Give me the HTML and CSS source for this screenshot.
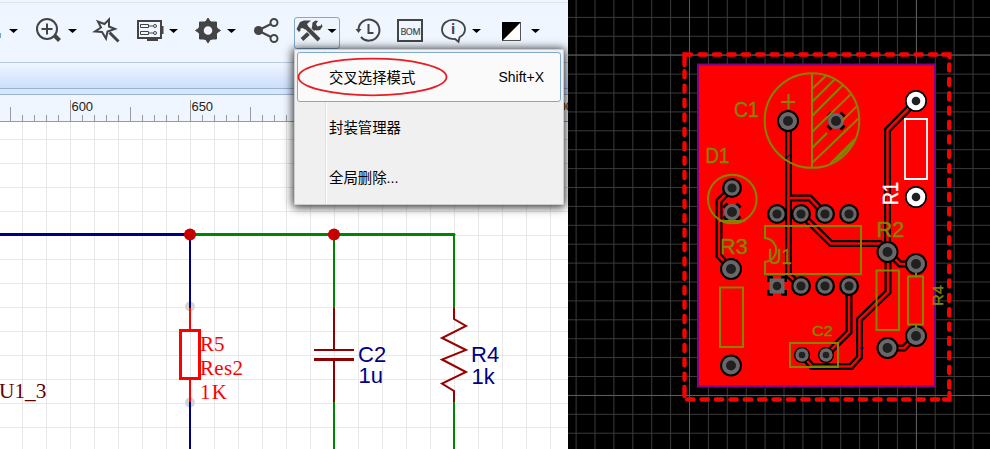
FILE: index.html
```html
<!DOCTYPE html>
<html lang="zh">
<head>
<meta charset="utf-8">
<title>Schematic and PCB</title>
<link rel="stylesheet" href="styles.css">
</head>
<body>
<main class="app">
<section class="schematic">
  <header class="toolbar">
    <svg viewBox="0 0 568 62" width="568" height="62">
      <path d="M0 2.500H568" stroke="#e2e4e8"/>
      <path d="M0 33h1v5H0z" fill="#64a9df"/>
      <g fill="#000"><path d="M9 29h9l-4.500 4z"/><path d="M68 29h9l-4.500 4z"/><path d="M169 29h9l-4.500 4z"/><path d="M227 29h9l-4.500 4z"/><path d="M472 29h9l-4.500 4z"/><path d="M531 29h9l-4.500 4z"/></g>
      <g fill="none" stroke="#444" stroke-width="2">
        <circle cx="47" cy="29" r="10"/><path d="M41.500 29h11M47 23.500v11"/><path d="M54.500 35.500l5 5" stroke-width="4"/>
        <path d="M109 19.500l-4.500 4.500-6.500-2.500 3 6-6 4 7 .5 4 6.500 1.500-7 7.500-2.500-6-2.500z"/><path d="M109.500 32.500l9 9" stroke-width="3"/>
        <path d="M138 21h23v17h-23z"/><path d="M162 26v8" stroke-width="3"/><path d="M147 39.500h11" stroke-width="3"/>
        <path d="M140.500 24.500h8v3h-8zM149 26h4M140.500 31.500h8v3h-8zM149 33h4" stroke-width="1"/><circle cx="155" cy="26" r="1.500" stroke-width="1"/><circle cx="155" cy="33" r="1.500" stroke-width="1"/>
        <circle cx="208" cy="30.500" r="7" stroke-width="5.500"/>
        <path d="M208 18l2.500 4h-5zM208 43l2.500-4h-5zM195.500 30.500l4-2.500v5zM220.500 30.500l-4-2.500v5zM199.500 22h4.500l-4.500 4.500zM216.500 22v4.500l-4.500-4.500zM216.500 39h-4.500l4.500-4.500zM199.500 39v-4.500l4.500 4.500z" fill="#444" stroke-width="1"/>
        <path d="M258 30.500l16-8M258 30.500l16 8" stroke-width="2.200"/><circle cx="274" cy="22.500" r="3.500" fill="#eff6ff"/><circle cx="274" cy="38.500" r="3.500" fill="#eff6ff"/><circle cx="258.500" cy="30.500" r="4.500" fill="#444" stroke="none"/>
      </g>
      <rect x="294.500" y="17.500" width="45" height="31" rx="2.500" fill="#eef5fd" stroke="#7fa9d0"/>
      <path d="M327.500 29h9l-4.500 4z"/>
      <path d="M302 39.500L316 26.500" stroke="#444" stroke-width="4"/>
      <path d="M315.500 20.500l2.500 .500-2 3 1.500 2.500 3.500-1 .5-2 1 3-2.500 3.500-4 .5-4-3 .500-5z" fill="#444"/>
      <path d="M305 26L319 40" stroke="#eef5fd" stroke-width="6"/><path d="M305 26L319 40" stroke="#444" stroke-width="4"/>
      <path d="M296.500 29l3.500-7 4-1.500h7l-4 3.500 1 2-3 3.500-2.500-1.500-2 .500v2l-1.500 1.500z" fill="#444"/>
      <g fill="none" stroke="#444" stroke-width="2"><path d="M358.500 29a10.500 10.500 0 1 1 2.500 8"/><path d="M368.500 24v9h5"/><path d="M355.500 29h6l-3 4z" fill="#444" stroke="none"/>
        <path d="M398 20h24v21h-24z"/><path d="M458.500 41.500l-3.500-2.800c-7.500 .4-13-3.700-13-9.500s5-9.700 11.200-9.700 11.800 4 11.800 9.500c0 4-2.500 6.500-5.500 8z" stroke-width="1.800" transform="translate(0 .3)"/>
      </g>
      <text x="453" y="34" class="info">i</text>
      <text x="400.500" y="34.500" class="bom" textLength="20">BOM</text>
      <path d="M502.500 22.500h18v18h-18z" fill="#fff" stroke="#555"/><path d="M502 22h19l-19 19z"/>
    </svg>
  </header>
  <div class="tabs"></div><div class="splitter"></div>
  <div class="ruler"><svg width="568" height="27" viewBox="0 0 568 27" id="ruler"></svg></div>
  <div class="sheet">
    <svg width="568" height="327" viewBox="0 122 568 327">
      <defs><pattern id="sgrid" x="22" y="139" width="24" height="24" patternUnits="userSpaceOnUse"><path d="M.5 0V24M0 .5H24" stroke="#e8e8e8" fill="none"/></pattern></defs>
      <path d="M0 122H568V449H0z" fill="url(#sgrid)"/>
      <g fill="none" stroke-width="2">
        <path d="M0 234.500H190" stroke="#000084" stroke-width="3"/><path d="M190 234.500H454" stroke="#008400" stroke-width="3" stroke-linecap="round"/>
        <g fill="#d5d5d5"><circle cx="190" cy="306.500" r="5"/><circle cx="190" cy="402.500" r="5"/></g>
        <path d="M190 235V308M190 402V449" stroke="#000084"/>
        <path d="M190 308V330M190 379V402" stroke="#f00"/><path d="M180.500 330.500h19v48h-19z" stroke="#f00" stroke-width="3"/>
        <path d="M334 235V308M334 402V449M454 235V308M454 402V449" stroke="#008400"/>
        <path d="M334 308V350M334 360V402M314 350H354" stroke="#900000"/><path d="M314 359.500H354" stroke="#900000" stroke-width="3"/>
        <path d="M454 308V319L466 326L442 338L466 350L442 359.500L466 372L442 383.500L454 391V402" stroke="#9a0000"/>
      </g>
      <circle cx="190" cy="234.500" r="6" fill="#c80000"/><circle cx="334" cy="234.500" r="6" fill="#c80000"/>
      <g class="part-selected"><text x="200" y="351">R5</text><text x="200" y="375" textLength="43">Res2</text><text x="200" y="399" textLength="27">1K</text></g>
      <text x="-1" y="398" class="net">U1_3</text>
      <g class="part"><text x="358" y="362">C2</text><text x="358.500" y="383">1u</text><text x="471" y="362">R4</text><text x="471.500" y="384">1k</text></g>
    </svg>
  </div>
  <div class="menu">
    <div class="item active"><span>交叉选择模式</span><kbd>Shift+X</kbd></div>
    <div class="item"><span>封装管理器</span></div>
    <div class="item"><span>全局删除...</span></div>
    <svg class="mark" width="152" height="42" viewBox="0 0 152 42"><ellipse cx="76.500" cy="21" rx="74" ry="18.300" fill="none" stroke="#e91c24" stroke-width="1.800"/></svg>
  </div>
</section>
<section class="pcb">
  <svg width="422" height="449" viewBox="568 0 422 449">
    <defs>
      <pattern id="pgrid" x="689" y="54.700" width="18.900" height="18.900" patternUnits="userSpaceOnUse"><path d="M.5 0V18.900M0 .5H18.900" stroke="#3a3a3a" fill="none"/></pattern>
      <path id="tracks" d="M788.500 121V275L801 286M790 198H810L825 214M801 214L831 243.500H880L888 252M916 101L887.500 130V252M888 252V292L859.500 319.500V357L851 366.500H812L802 355M849 286V332L826 355M732 188L719 201V256L731 269M888 252L900 264H916M888 348H904L916 336"/>
      <g id="pad"><circle r="10"/><circle r="7.700" fill="#686868"/><circle r="4.600" fill="#202020"/></g>
      <g id="big"><circle r="11"/><circle r="9" fill="#686868"/><circle r="5" fill="#202020"/></g>
      <g id="thermal"><path d="M-8.500-4.500L-4.500-8.500M4.500-8.500L8.500-4.500M8.500 4.500L4.500 8.500M-4.500 8.500L-8.500 4.500" fill="none" stroke="#000" stroke-width="3"/><circle r="8" fill="#686868"/><circle r="5" fill="#202020"/></g>
      <g id="small"><circle r="8"/><circle r="6.700" fill="#686868"/><circle r="3.300" fill="#202020"/></g>
      <g id="white"><circle r="11"/><circle r="9.300" fill="#fff"/><circle r="4.300" fill="#202020"/></g>
    </defs>
    <path d="M568 0H990V449H568z" fill="#000"/><path d="M568 0H990V449H568z" fill="url(#pgrid)"/>
    <path d="M689.500 0V449M916.500 0V449M568 55H990M568 395.500H990" stroke="#5a5a5a"/>
    <g fill="none" stroke="#f00" stroke-width="4.500">
      <g stroke-linecap="round" stroke-dasharray="6.200 8.200">
        <path d="M699.600 54.500H944M687.200 399.500H944"/><path d="M684.500 71.200V388M949.200 64.400V390" stroke-width="4.300"/>
      </g>
      <path d="M684.500 65V54.500H691M943 54.500H949.500V57M684.500 387V396M944 399.500H949.500V393" stroke-linecap="round" stroke-width="4.300"/>
    </g>
    <path d="M698 64.500H935V386.500H698z" fill="#f00" stroke="#840084" stroke-width="2"/>
    <g fill="none">
      <use href="#tracks" stroke="#000" stroke-width="7"/><use href="#tracks" stroke="#f00" stroke-width="2.600"/>
      <path d="M787 158l4-5M860 348h4M835 347l3 2" stroke="#0000c8"/>
    </g>
    <use href="#big" x="788" y="121"/><use href="#thermal" x="836" y="121"/><use href="#pad" x="732" y="188"/><use href="#thermal" x="732" y="212"/>
    <use href="#pad" x="777" y="214"/><use href="#pad" x="801" y="214"/><use href="#pad" x="825" y="214"/><use href="#pad" x="849" y="214"/>
    <use href="#pad" x="801" y="286"/><use href="#pad" x="825" y="286"/><use href="#pad" x="849" y="286"/>
    <path d="M768.500 282v-4.500h4.500M781 277.500h4.500v4.500M785.500 290v4.500h-4.500M773 294.500h-4.500v-4.500" fill="none" stroke="#000" stroke-width="3"/><path d="M769.500 278.500h15v15h-15z" fill="#686868"/><circle cx="777" cy="286" r="4.300" fill="#202020"/>
    <use href="#big" x="731" y="269"/><use href="#big" x="731" y="365.500"/><use href="#big" x="887.500" y="252"/><use href="#big" x="916" y="264"/><use href="#big" x="916" y="336"/><use href="#big" x="887.500" y="348"/>
    <use href="#small" x="802" y="355"/><use href="#small" x="826" y="355"/>
    <use href="#white" x="916" y="101"/><use href="#white" x="916" y="197"/>
    <g fill="none" stroke="#848400" stroke-width="2">
      <circle cx="812" cy="120.500" r="47.300"/><path d="M812 73V168M788.500 94V109M781 102H795"/>
      <path d="M812 89L825.700 76M812 102L835 79M812 116L843 85M812 132L851 94M812 148L827 133M842 121L857 106M812 163L859 118M830 164L855 139M836 160L853 143" />
      <circle cx="732.300" cy="199" r="24.300"/><path d="M719 221H745"/>
      <path d="M765 226H861V274H765V262C780 260 780 240 765 238z"/>
      <path d="M720 287.500h23v59.500h-23zM876.500 270.500h22.500v59.500h-22.500zM908 276.500h15v48h-15zM790 343h48v24h-48zM916 273v3M916 325v3"/>
    </g>
    <path d="M905 119h22v60h-22z" fill="none" stroke="#fff" stroke-width="1.800"/>
    <g class="silk">
      <text x="734" y="116.500" textLength="25" lengthAdjust="spacingAndGlyphs">C1</text><text x="705.500" y="163" textLength="24" lengthAdjust="spacingAndGlyphs">D1</text><text x="720" y="254" textLength="28" lengthAdjust="spacingAndGlyphs">R3</text><text x="768" y="263.500" textLength="24" lengthAdjust="spacingAndGlyphs">U1</text><text x="876.500" y="237" textLength="28" lengthAdjust="spacingAndGlyphs">R2</text>
      <text class="tiny" x="812" y="336" textLength="21" lengthAdjust="spacingAndGlyphs">C2</text><text class="tiny" transform="translate(942.500 306) rotate(-90)" textLength="21" lengthAdjust="spacingAndGlyphs">R4</text><text class="selected" transform="translate(898 205) rotate(-90)" textLength="23" lengthAdjust="spacingAndGlyphs">R1</text>
    </g>
  </svg>
</section>
</main>
<script src="ruler.js"></script>
</body>
</html>
```
FILE: styles.css
```css
* { box-sizing: border-box; }
body { margin: 0; overflow: hidden; font-family: "Liberation Sans", "Noto Sans CJK SC", sans-serif; }
.app { display: grid; grid-template-columns: 568px 422px; width: 990px; height: 449px; }
.app svg { display: block; }
.schematic { position: relative; display: flex; flex-direction: column; overflow: hidden; background: #fff; }
.toolbar { height: 62px; background: #eff6ff; }
.tabs { height: 27px; border-top: 1px solid #b8cbe0; border-bottom: 1px solid #98b3d4; background: linear-gradient(#f0f6ff, #cbdffb); }
.splitter { height: 6px; background: #d7e6fa; border-bottom: 1px solid #98b3d4; }
.ruler { height: 27px; background: #eff6ff; }
.ruler text { font-size: 13px; fill: #222; }
.sheet { height: 327px; }
.bom { font: 500 9px "Open Sans", sans-serif; fill: #444; stroke: #444; stroke-width: .2px; }
.info { font: bold 14px "Noto Sans", sans-serif; fill: #444; text-anchor: middle; }
.part-selected { font: 21px "Liberation Serif", serif; fill: #f00; }
.net { font: 21.300px "Liberation Serif", serif; fill: #640000; }
.part { font-size: 22px; fill: #000084; }
.menu { position: absolute; left: 294px; top: 49px; width: 270px; height: 156px; padding: 2px; border: 1px solid #ccc; background: linear-gradient(90deg, transparent 30px, #dfdfdf 30px, #dfdfdf 31px, #fff 31px, #fff 32px, transparent 32px), #f0f0f0; box-shadow: 0 1px 9px 1px rgba(0,0,0,.85); }
.item { display: flex; align-items: center; justify-content: space-between; height: 50px; padding: 0 16px 2px 32px; font-size: 14.400px; color: #000; }
.item.active { padding-left: 31px; border: 1px solid #7da9d0; border-radius: 3px; background: #fafafa; }
.item kbd { font: 14px "Liberation Sans", sans-serif; padding-top: 2px; }
.mark { position: absolute; left: 1px; top: 6px; }
.pcb { overflow: hidden; }
.silk { font: 21.500px "Liberation Sans", sans-serif; fill: #848400; stroke: #848400; stroke-width: .4px; }
.silk .tiny { font-size: 15.500px; }
.silk .selected { fill: #fff; stroke: #fff; }
```
FILE: ruler.js
```js
const ruler = document.getElementById('ruler');
let marks = '<path d="M0 26.500H568" stroke="#999"/>';
for (let x = 10, i = 0; x < 568; x += 12, i++) {
  const top = i % 10 === 5 ? 5 : i % 5 === 0 ? 12 : 20;
  marks += `<path d="M${x + 0.5} ${top}V26" stroke="#999"/>`;
  if (i % 10 === 5) marks += `<text x="${x + 1.5}" y="15.500" textLength="21.500">${600 + (i - 5) * 5}</text>`;
}
ruler.innerHTML = marks;
```
